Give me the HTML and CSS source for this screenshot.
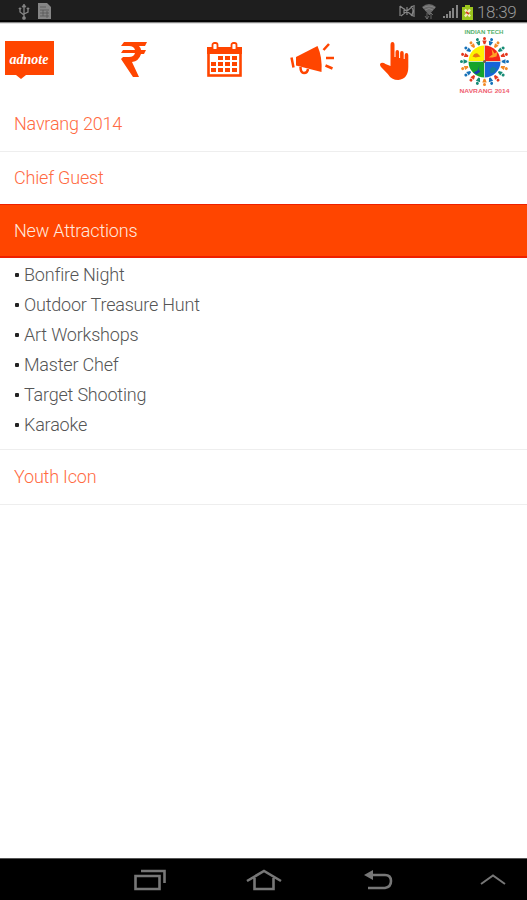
FILE: index.html
```html
<!DOCTYPE html>
<html lang="en">
<head>
<meta charset="utf-8">
<title>Navrang 2014</title>
<link rel="stylesheet" href="styles.css">
</head>
<body>
<div class="screen">
  <div class="status">
    <svg class="usb" width="14" height="18" viewBox="0 0 14 18" fill="none" stroke="#858585" stroke-width="1.3"><path d="M7 3v12M7 12L3 9V6M7 11l4-2V6"/><path d="M5 4l2-3 2 3zM2 5h2v1H2zM10 5h2v1h-2z" fill="#858585" stroke-width=".7"/><circle cx="7" cy="15" r="1.2" fill="#858585"/></svg>
    <svg class="sim" width="15" height="18" viewBox="0 0 15 18"><path d="M1 1h9l4 4v12H1z" fill="#858585"/><path d="M3 5h6M3 8h9M3 11h9M3 14h9M6 8v6M10 9v7" stroke="#555" stroke-width=".8"/></svg>
    <svg class="mute" width="17" height="14" viewBox="0 0 17 14" fill="none" stroke="#858585" stroke-width="1.2"><path d="M1 2v10M1 2l13 10M2 12L14 2M5 4v6M8 3v8M12 2q4 5 0 10M15 1v12"/></svg>
    <svg class="wifi" width="16" height="18" viewBox="0 0 16 18"><path d="M1 5Q8-1 15 5L8 13z" fill="#686868"/><path d="M2 6q6-4 12 0M4 8q4-3 8 0" fill="none" stroke="#858585"/><path d="M6 11v6M4 14l2 3 2-3M10 17v-6M8 13l2-2 2 2" stroke="#777" stroke-width=".8" fill="none"/></svg>
    <svg class="signal" width="16" height="15" viewBox="0 0 16 15" fill="#858585"><path d="M0 12h2v2H0zM3 10h2v4H3zM6 7h2v7H6zM9 4h2v10H9zM13 1h2v13h-2z"/></svg>
    <svg class="battery" width="11" height="16" viewBox="0 0 11 16"><path d="M3 0h5v2h3v13H0V2h3z" fill="#9bc51d"/><path d="M3 4.500l5 7M8 4.500l-5 7" stroke="#f5eac0" stroke-width="2.200" fill="none"/><path d="M4 7l3 2" stroke="#d64020" stroke-width="2"/></svg>
    <span class="clock">18:39</span>
  </div>
  <div class="tabs">
    <svg class="t-note" width="50" height="40" viewBox="0 0 50 40"><path d="M0 1h49v34H21l-5 4-5-4H0z" fill="#ff4500"/><text class="brand" x="24" y="24" text-anchor="middle" textLength="39" lengthAdjust="spacingAndGlyphs">adnote</text></svg>
    <svg class="t-rupee" width="28" height="40" viewBox="0 0 28 40"><path d="M4 2h23l-2 4h-6q2 2 2 4h5l-2 4h-3q-2 7-9 8l7 15h-6L1 19l2-2h6q5 0 6-4H1l2-3h12q-1-4-6-4H1z" fill="#ff4500"/></svg>
    <svg class="t-cal" width="38" height="40" viewBox="0 0 38 40"><rect x="3.500" y="7.500" width="32" height="27" fill="#fff" stroke="#ff4500" stroke-width="2.600"/><path d="M2 6h35v7H2z" fill="#ff4500"/><rect x="7.500" y="2" width="5" height="7" rx="1.800" fill="#fff" stroke="#ff4500" stroke-width="1.800"/><rect x="26.500" y="2" width="5" height="7" rx="1.800" fill="#fff" stroke="#ff4500" stroke-width="1.800"/><path d="M13 15h5v4h-5zM20 15h5v4h-5zM27 15h5v4h-5zM6 21h5v4H6zM13 21h5v4h-5zM20 21h5v4h-5zM27 21h5v4h-5zM6 27h5v4H6zM13 27h5v4h-5zM20 27h5v4h-5zM27 27h5v4h-5z" fill="#ff4500"/></svg>
    <svg class="t-horn" width="46" height="40" viewBox="0 0 46 40"><path d="M7 17L28.500 6q5 11 4 26L7 25.500z" fill="#ff4500"/><path d="M2.500 17.500l2 10M11.500 27q0 6 3.500 6t4-4M34.500 10l5.500-6M37 18h8M36.500 25.500l7 3" fill="none" stroke="#ff4500" stroke-width="2.500"/></svg>
    <svg class="t-hand" width="32" height="40" viewBox="0 0 32 40"><path d="M11.500 25V4q0-3 2-3t2 3v12h1V11q0-2 1.800-2t1.800 2v6h1v-5q0-2 1.800-2t1.800 2v6h1v-4q0-2 1.800-2t1.800 2v12q0 12-10 13-7 0-10.500-6L2 26q-2-3 0-4 2-1 4.500 1z" fill="#ff4500"/></svg>
    <svg class="t-logo" width="54" height="72" viewBox="0 0 54 72">
      <defs>
        <g id="figure"><circle cy="-23" r="1.500"/><path d="M-2.200-21h4.400L.8-17.200H-.8z"/></g>
        <g id="dancers"><use href="#figure" fill="#e5391f"/><use href="#figure" fill="#1671b8" transform="rotate(18)"/><use href="#figure" fill="#f28a25" transform="rotate(36)"/><use href="#figure" fill="#168c75" transform="rotate(54)"/></g>
      </defs>
      <text class="cap green" x="26" y="9" text-anchor="middle" textLength="39" lengthAdjust="spacingAndGlyphs">INDIAN TECH</text>
      <g transform="translate(26.500 36.500)">
        <use href="#dancers"/><use href="#dancers" transform="rotate(72)"/><use href="#dancers" transform="rotate(144)"/><use href="#dancers" transform="rotate(216)"/><use href="#dancers" transform="rotate(288)"/>
        <path d="M0 0v-16A16 16 0 0 0-16 0z" fill="#fff200"/><path d="M0 0h16A16 16 0 0 0 0-16z" fill="#f52718"/><path d="M0 0h-16A16 16 0 0 0 0 16z" fill="#16a32b"/><path d="M0 0v16A16 16 0 0 0 16 0z" fill="#1764d8"/>
        <path d="M-12-5q2-4 5-3l3 3-5 1z" fill="#e87814"/><path d="M4-4l4-3-1-6 3 5 3-2-1 5-4 1z" fill="#ffa126"/><path d="M-5 4l-1 4 2 2-4 3-3-2 4-2z" fill="#173bb5"/><path d="M5 8l3-3 4 2-2 4-4 1z" fill="#147c9c"/>
        <path d="M-17 0h34M0-17v34" stroke="#dbe9d5" stroke-width=".8"/><circle r="1.500" fill="#785b4e"/>
      </g>
      <text class="cap red" x="26.500" y="68" text-anchor="middle" textLength="50" lengthAdjust="spacingAndGlyphs">NAVRANG 2014</text>
    </svg>
  </div>
  <div class="list">
    <div class="row first">Navrang 2014</div>
    <div class="row">Chief Guest</div>
    <div class="row active">New Attractions</div>
    <ul class="items"><li>Bonfire Night</li><li>Outdoor Treasure Hunt</li><li>Art Workshops</li><li>Master Chef</li><li>Target Shooting</li><li>Karaoke</li></ul>
    <div class="row last">Youth Icon</div>
  </div>
  <div class="nav">
    <svg class="n-recent" width="34" height="24" viewBox="0 0 34 24"><path d="M2.500 8h24v13h-24zM8 3h23.500v12" stroke-width="2.600"/></svg>
    <svg class="n-home" width="36" height="24" viewBox="0 0 36 24"><path d="M1 13L18 3l17 10M8.500 10v11h19V10" stroke-width="2.600"/></svg>
    <svg class="n-back" width="30" height="24" viewBox="0 0 30 24"><path d="M8 7h13q6 0 6 6t-6 7H4" stroke-width="2.600"/><path d="M0 7l9-5v10z" fill="#777" stroke="none"/></svg>
    <svg class="n-up" width="28" height="24" viewBox="0 0 28 24"><path d="M2 16l12-8.500L26 16" stroke-width="2"/></svg>
  </div>
</div>
</body>
</html>
```
FILE: styles.css
```css
body { margin: 0; background: #fff; font-family: Roboto, "Liberation Sans", sans-serif; }
.screen { width: 527px; height: 900px; display: flex; flex-direction: column; overflow: hidden; }
.screen svg { flex: none; display: block; }
.status { box-sizing: border-box; height: 24px; flex: none; display: flex; align-items: flex-start; background: linear-gradient(#1e1e1e 0 20px, #050505 20px 22px, #888 22px 23px, #e2e2e2 23px); }
.usb { margin: 3px 0 0 17px; }
.sim { margin: 2px 0 0 6px; }
.mute { margin: 4px 0 0 347px; }
.wifi { margin: 2px 0 0 5px; }
.signal { margin: 4px 0 0 6px; }
.battery { margin: 5px 0 0 3px; }
.clock { margin-left: 4px; font-size: 17px; line-height: 25px; letter-spacing: -0.4px; color: #999; font-weight: 300; white-space: nowrap; }
.tabs { height: 73px; flex: none; display: flex; align-items: flex-start; }
.t-note { margin: 16px 0 0 5px; }
.t-rupee { margin: 16px 0 0 65px; }
.t-cal { margin: 17px 0 0 57px; }
.t-horn { margin: 16px 0 0 46px; }
.t-hand { margin: 17px 0 0 44px; }
.t-logo { margin: 1px 0 0 47px; }
.brand { font: italic bold 15px "Liberation Serif", serif; fill: #fff; }
.cap { font: bold 5.500px "Liberation Sans", sans-serif; }
.green { fill: #55b16a; }
.red { fill: #ef6070; }
.list { flex: 1; }
.row { box-sizing: border-box; height: 53px; padding-left: 14px; font-size: 18px; line-height: 53px; letter-spacing: -0.2px; font-weight: 300; color: #ff6a42; }
.first { height: 55px; border-bottom: 1px solid #eee; line-height: 54px; }
.row + .row { line-height: 51px; }
.row.active { height: 54px; margin-top: -1px; line-height: 51px; background: #ff4500; color: #ffe9df; border-top: 1px solid #ee2000; border-bottom: 2px solid #ee2000; }
.items { margin: 0; padding: 2px 0 9px 14px; list-style: none; border-bottom: 1px solid #eee; font-size: 18px; font-weight: 300; line-height: 30px; letter-spacing: -0.2px; color: #555; }
.items li::before { content: ""; display: inline-block; width: 4px; height: 4px; margin: 0 5px 4px 1px; border-radius: 1px; background: #222; vertical-align: baseline; }
.last { height: 55px; border-bottom: 1px solid #eee; }
.nav { box-sizing: border-box; height: 42px; flex: none; display: flex; align-items: center; background: #000; border-top: 1px solid #555; }
.nav svg { fill: none; stroke: #777; }
.n-recent { margin-left: 133px; }
.n-home { margin-left: 79px; }
.n-back { margin-left: 82px; }
.n-up { margin-left: 85px; }
```
